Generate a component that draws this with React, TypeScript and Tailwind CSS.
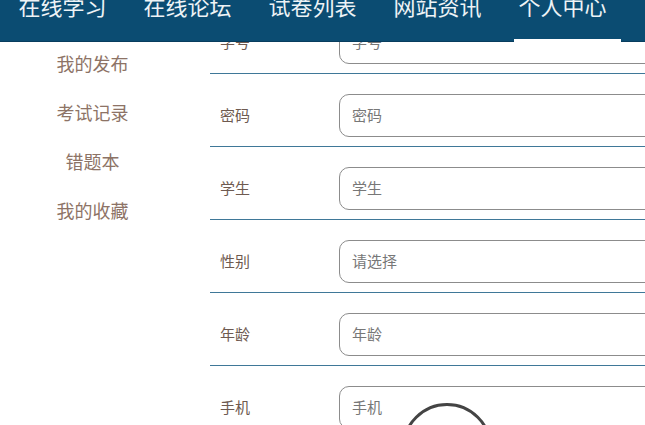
import React from "react";

const navItems = ["在线学习", "在线论坛", "试卷列表", "网站资讯", "个人中心"];
const sideItems = ["我的发布", "考试记录", "错题本", "我的收藏"];
const rows = [
  { label: "学号", ph: "学号" },
  { label: "密码", ph: "密码" },
  { label: "学生", ph: "学生" },
  { label: "性别", ph: "请选择" },
  { label: "年龄", ph: "年龄" },
  { label: "手机", ph: "手机" },
];

export default function App() {
  const font = { fontFamily: '"Microsoft YaHei", "Noto Sans CJK SC", "Noto Sans", sans-serif' };
  return (
    <div className="relative w-[645px] h-[425px] overflow-hidden bg-white" style={font}>
      {/* fixed header */}
      <div className="absolute left-0 top-0 z-10 w-full h-[42px] bg-[#0b4c72] border-b border-[#083d5e]">
        <div className="flex pl-[9px] gap-[18px]">
          {navItems.map((n, i) => (
            <div
              key={n}
              className={
                "w-[107px] h-[41px] text-center text-[22px] leading-[22px] text-[#eef3f6] -mt-[6px] " +
                (i === 4 ? "relative" : "")
              }
            >
              {n}
              {i === 4 && <div className="absolute left-[5px] right-[-5px] top-[45px] h-[3px] bg-white" />}
            </div>
          ))}
        </div>
      </div>

      <div className="flex">
        {/* sidebar */}
        <div className="w-[185px] shrink-0 pt-[39px] flex flex-col">
          {sideItems.map((s) => (
            <div key={s} className="h-[49px] flex items-center justify-center text-[18px] text-[#8d7366]">
              {s}
            </div>
          ))}
        </div>

        {/* form */}
        <div className="ml-[25px] w-[520px] shrink-0 pt-[1px]">
          {rows.map((r) => (
            <div key={r.label} className="flex items-center pt-[20px] pb-[9px] border-b border-[#3f7898]">
              <div className="w-[129px] pl-[10px] text-[15px] text-[#6e5a50]">{r.label}</div>
              <div className="flex-1 h-[43px] rounded-[10px] border border-[#8c8c8c] flex items-center pl-[12px] text-[15px] text-[#777]">
                {r.ph}
              </div>
            </div>
          ))}
        </div>
      </div>

      {/* floating circle */}
      <div className="absolute left-[402px] top-[403px] w-[90px] h-[90px] rounded-full border-[3px] border-[#444]" />
    </div>
  );
}
